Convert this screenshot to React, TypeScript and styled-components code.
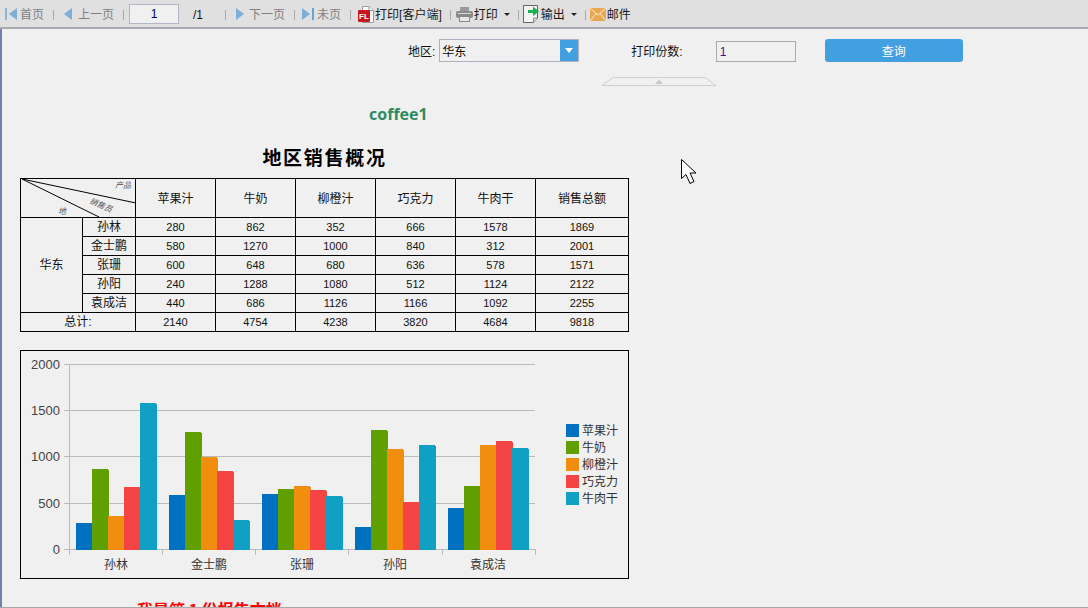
import React from "react";
import styled, { createGlobalStyle } from "styled-components";

const FONT = `"Liberation Sans", "Noto Sans CJK SC", sans-serif`;

const Global = createGlobalStyle`
  html, body { margin: 0; padding: 0; width: 1088px; height: 608px; overflow: hidden; background: #f0f0f0; }
  body { font-family: ${FONT}; font-size: 12px; color: #000; }
`;

const Page = styled.div`
  position: relative;
  width: 1088px;
  height: 608px;
  overflow: hidden;
  box-sizing: border-box;
  display: flex;
  flex-direction: column;
  border-bottom: 1px solid #a8a8a8;
`;

const Toolbar = styled.div`
  flex: none;
  height: 26px;
  padding: 1px 0 0 5px;
  display: flex;
  align-items: center;
  background: #e0e0e0;
  border-bottom: 2px solid #a9a9b2;
  box-sizing: content-box;
`;

const Tool = styled.div<{ $muted?: boolean; $gap?: number }>`
  display: flex;
  align-items: center;
  gap: ${(p) => p.$gap ?? 1}px;
  color: ${(p) => (p.$muted ? "#808080" : "#1a1a1a")};
  font-size: 12px;
  line-height: 16px;
  white-space: nowrap;
`;

const ToolLabel = styled.span`
  margin-top: 2px;
`;

const Sep = styled.span<{ $l: number; $r: number }>`
  width: 1px;
  height: 10px;
  margin: 2px ${(p) => p.$r}px 0 ${(p) => p.$l}px;
  background: #a8a8a8;
`;

const PageInput = styled.input`
  width: 50px;
  height: 20px;
  padding: 0;
  box-sizing: border-box;
  border: 1px solid #b4b4c4;
  background: #f0f0f0;
  text-align: center;
  font: 12px ${FONT};
  color: #000060;
  outline: none;
`;

const PageTotal = styled.span`
  margin: 2px 0 0 14px;
  width: 32px;
  font-size: 12px;
  color: #111;
`;

const Caret = styled.span<{ $l: number }>`
  width: 0;
  height: 0;
  margin-left: ${(p) => p.$l}px;
  border-left: 3px solid transparent;
  border-right: 3px solid transparent;
  border-top: 3px solid #222;
`;

const Main = styled.div`
  flex: 1;
  min-height: 0;
  border-left: 2px solid #6f82a8;
  display: flex;
  flex-direction: column;
`;

const FilterBar = styled.div`
  flex: none;
  height: 23px;
  margin-top: 10px;
  padding-left: 406px;
  display: flex;
  align-items: center;
`;

const FieldLabel = styled.label<{ $l?: number }>`
  margin-left: ${(p) => p.$l ?? 0}px;
  font-size: 12px;
  color: #111;
  white-space: nowrap;
`;

const SelectBox = styled.div`
  width: 140px;
  height: 23px;
  margin-left: 4px;
  box-sizing: border-box;
  border: 1px solid #b0b0c0;
  display: flex;
  align-items: stretch;
`;

const SelectText = styled.span`
  flex: 1;
  padding: 2px 0 0 2px;
  line-height: 20px;
  font-size: 12px;
`;

const SelectButton = styled.span`
  width: 18px;
  background: #42a0e0;
  display: flex;
  align-items: center;
  justify-content: center;
`;

const SelectArrow = styled.span`
  width: 0;
  height: 0;
  border-left: 4px solid transparent;
  border-right: 4px solid transparent;
  border-top: 5px solid #fff;
`;

const CopiesInput = styled.input`
  width: 80px;
  height: 21px;
  margin: 2px 0 0 33px;
  padding: 0 0 0 3px;
  box-sizing: border-box;
  border: 1px solid #aaa;
  background: #f0f0f0;
  font: 12px ${FONT};
  color: #4b0f90;
  outline: none;
`;

const QueryButton = styled.button`
  width: 138px;
  height: 23px;
  margin-left: 29px;
  padding: 0;
  border: none;
  border-radius: 3px;
  background: #42a0e0;
  color: #fff;
  font: 12px ${FONT};
`;

const Handle = styled.svg`
  flex: none;
  display: block;
  width: 116px;
  height: 9px;
  margin: 15px 0 0 599px;
`;

const ReportName = styled.div`
  flex: none;
  margin: 17px 0 0 367px;
  height: 22px;
  font: bold 16px/22px "Open Sans", "Noto Sans", sans-serif;
  color: #2e8b5f;
`;

const Report = styled.div`
  flex: none;
  width: 609px;
  margin-left: 18px;
  display: flex;
  flex-direction: column;
`;

const ReportTitle = styled.div`
  margin-top: 20px;
  height: 24px;
  text-align: center;
  font: bold 19px/24px "Noto Sans CJK SC", sans-serif;
  letter-spacing: 1.7px;
  color: #000;
`;

const Table = styled.table`
  width: 608px;
  margin-top: 9px;
  border-collapse: collapse;
  table-layout: fixed;
  border: 1px solid #000;
`;

const Cell = styled.td<{ $num?: boolean }>`
  height: 18px;
  padding: 0;
  border: 1px solid #000;
  text-align: center;
  vertical-align: middle;
  font-size: ${(p) => (p.$num ? 11 : 12)}px;
  line-height: 14px;
  color: #111;
`;

const HeadCell = styled(Cell)`
  height: 38px;
  padding-top: 2px;
  box-sizing: border-box;
`;

const DiagonalCell = styled(Cell)`
  position: relative;
  height: 38px;
`;

const DiagonalLines = styled.svg`
  position: absolute;
  left: 0;
  top: 0;
  width: 115px;
  height: 38px;
`;

const DiagonalLabel = styled.span<{ $x: number; $y: number; $r?: number }>`
  position: absolute;
  left: ${(p) => p.$x}px;
  top: ${(p) => p.$y}px;
  font: italic 8px/10px "Noto Sans CJK SC", sans-serif;
  color: #555;
  white-space: nowrap;
  transform: rotate(${(p) => p.$r ?? 0}deg);
`;

const ChartBox = styled.div`
  width: 609px;
  height: 229px;
  margin-top: 18px;
  box-sizing: border-box;
  border: 1px solid #000;
`;

const ChartSvg = styled.svg`
  display: block;
  width: 607px;
  height: 227px;
  text {
    font-family: ${FONT};
  }
`;

const Footer = styled.div`
  margin: 20px 0 0 117px;
  font: bold 16px/20px "Noto Sans CJK SC", sans-serif;
  color: #ff0000;
  white-space: nowrap;
`;

const Cursor = styled.svg`
  position: absolute;
  left: 680px;
  top: 158px;
  width: 18px;
  height: 27px;
`;

const products = ["苹果汁", "牛奶", "柳橙汁", "巧克力", "牛肉干"];
const colors = ["#0070c0", "#5f9f00", "#f18e10", "#f44444", "#10a0c4"];
const rows: [string, number[], number][] = [
  ["孙林", [280, 862, 352, 666, 1578], 1869],
  ["金士鹏", [580, 1270, 1000, 840, 312], 2001],
  ["张珊", [600, 648, 680, 636, 578], 1571],
  ["孙阳", [240, 1288, 1080, 512, 1124], 2122],
  ["袁成洁", [440, 686, 1126, 1166, 1092], 2255],
];
const totals = [2140, 4754, 4238, 3820, 4684, 9818];
const groupX = [76, 169, 262, 355, 448];
const gridLines: [number, number][] = [
  [0, 549],
  [500, 503],
  [1000, 456],
  [1500, 410],
  [2000, 364],
];

const BLUE = "#7eaed6";

const FirstIcon = () => (
  <svg width="13" height="12" viewBox="0 0 13 12">
    <rect x="0" y="0" width="2" height="12" fill="#8ab6da" />
    <path d="M12 0V12L4 6Z" fill={BLUE} />
  </svg>
);
const PrevIcon = () => (
  <svg width="10" height="12" viewBox="0 0 10 12">
    <path d="M9 0V12L1 6Z" fill={BLUE} />
  </svg>
);
const NextIcon = () => (
  <svg width="10" height="12" viewBox="0 0 10 12">
    <path d="M1 0V12L9 6Z" fill={BLUE} />
  </svg>
);
const LastIcon = () => (
  <svg width="13" height="12" viewBox="0 0 13 12">
    <path d="M0 0V12L8 6Z" fill={BLUE} />
    <rect x="10" y="0" width="2" height="12" fill="#6fa3cf" />
  </svg>
);
const ClientIcon = () => (
  <svg width="16" height="17" viewBox="0 0 16 17">
    <path d="M4.5 .5H11L15.5 4.5V16.5H4.5Z" fill="#fff" stroke="#999" />
    <path d="M11 .5V4.5H15.5" fill="#eee" stroke="#999" />
    <rect x="0" y="4" width="12" height="12" rx="1" fill="#c8161d" />
    <text x="6" y="13" textAnchor="middle" fontSize="8" fontWeight="700" fontFamily="Liberation Sans" fill="#fff">FL</text>
  </svg>
);
const PrinterIcon = () => (
  <svg width="17" height="15" viewBox="0 0 17 15">
    <rect x="4" y="0" width="9" height="5" fill="#999" />
    <rect x="0" y="4" width="17" height="7" rx="2" fill="#8a8a8a" />
    <rect x="2" y="6" width="13" height="1" fill="#d8d8d8" />
    <rect x="3.5" y="9.5" width="10" height="5" fill="#e8e8e8" stroke="#888" />
  </svg>
);
const ExportIcon = () => (
  <svg width="17" height="18" viewBox="0 0 17 18">
    <path d="M.5 .5H14.5V13L10.5 17.5H.5Z" fill="#f4f4f4" stroke="#666" />
    <path d="M10.5 17.5V13H14.5" fill="#ddd" stroke="#888" />
    <path d="M5 5H10V1.5L16 6.5L10 11V8H5Z" fill="#18b050" />
  </svg>
);
const MailIcon = () => (
  <svg width="16" height="13" viewBox="0 0 16 13">
    <rect x="0" y="0" width="16" height="13" fill="#e8a552" />
    <path d="M0 0L8 7L16 0M0 13L6 5.5M16 13L10 5.5" fill="none" stroke="#f8d9a8" strokeWidth="1.2" />
  </svg>
);

const Chart = () => {
  const topOf = (v: number) => Math.round(549 - (v * 185) / 2000);
  return (
    <ChartSvg viewBox="21 351 607 227">
      {gridLines.map(([v, row]) => (
        <g key={v}>
          <line x1="64" x2="535" y1={row + 0.5} y2={row + 0.5} stroke="#bbb" />
          <text x="60" y={row + 5} textAnchor="end" fontSize="13" fill="#444">{v}</text>
        </g>
      ))}
      <line x1="69.5" x2="69.5" y1="364" y2="550" stroke="#bbb" />
      {[69.5, 162.5, 255.5, 348.5, 442.5, 535.5].map((x) => (
        <line key={x} x1={x} x2={x} y1="549" y2="555" stroke="#bbb" />
      ))}
      {rows.map(([name, vals], g) => (
        <g key={name}>
          {vals.map((v, i) => {
            const top = topOf(v);
            const x = groupX[g] + i * 16;
            return (
              <g key={i} fill={colors[i]}>
                <rect x={x} y={top} width="16" height={550 - top} />
                <rect x={x} y={top + 1} width="17" height={549 - top} />
              </g>
            );
          })}
          <text x={groupX[g] + 40} y="569" textAnchor="middle" fontSize="12" fill="#333">{name}</text>
        </g>
      ))}
      {products.map((p, i) => (
        <g key={p}>
          <rect x="566" y={424 + i * 17} width="13" height="13" fill={colors[i]} />
          <text x="582" y={435 + i * 17} fontSize="12" fill="#333">{p}</text>
        </g>
      ))}
    </ChartSvg>
  );
};

export default function App() {
  return (
    <Page>
      <Global />
      <Toolbar>
        <Tool $muted $gap={2}><FirstIcon /><ToolLabel>首页</ToolLabel></Tool>
        <Sep $l={9} $r={9} />
        <Tool $muted $gap={5}><PrevIcon /><ToolLabel>上一页</ToolLabel></Tool>
        <Sep $l={9} $r={5} />
        <PageInput value="1" readOnly />
        <PageTotal>/1</PageTotal>
        <Sep $l={0} $r={9} />
        <Tool $muted $gap={4}><NextIcon /><ToolLabel>下一页</ToolLabel></Tool>
        <Sep $l={9} $r={7} />
        <Tool $muted $gap={2}><LastIcon /><ToolLabel>未页</ToolLabel></Tool>
        <Sep $l={9} $r={7} />
        <Tool $gap={1}><ClientIcon /><ToolLabel>打印[客户端]</ToolLabel></Tool>
        <Sep $l={8} $r={5} />
        <Tool $gap={1}><PrinterIcon /><ToolLabel>打印</ToolLabel><Caret $l={5} /></Tool>
        <Sep $l={8} $r={4} />
        <Tool $gap={1}><ExportIcon /><ToolLabel>输出</ToolLabel><Caret $l={5} /></Tool>
        <Sep $l={8} $r={4} />
        <Tool $gap={1}><MailIcon /><ToolLabel>邮件</ToolLabel></Tool>
      </Toolbar>
      <Main>
        <FilterBar>
          <FieldLabel>地区:</FieldLabel>
          <SelectBox>
            <SelectText>华东</SelectText>
            <SelectButton><SelectArrow /></SelectButton>
          </SelectBox>
          <FieldLabel $l={52}>打印份数:</FieldLabel>
          <CopiesInput value="1" readOnly />
          <QueryButton>查询</QueryButton>
        </FilterBar>
        <Handle viewBox="0 0 116 9">
          <path d="M1 8.5L12 .5H104L115 8.5Z" fill="none" stroke="#d0d0d0" />
          <path d="M54 7L58 2.5L62 7Z" fill="#c8c8c8" />
        </Handle>
        <ReportName>coffee1</ReportName>
        <Report>
          <ReportTitle>地区销售概况</ReportTitle>
          <Table>
            <colgroup>
              <col width="62" />
              <col width="53" />
              <col width="80" />
              <col width="80" />
              <col width="80" />
              <col width="80" />
              <col width="80" />
              <col width="93" />
            </colgroup>
            <tbody>
              <tr>
                <DiagonalCell colSpan={2}>
                  <DiagonalLines viewBox="0 0 115 38">
                    <path d="M1 0L115 24M1 0L78 38" stroke="#000" fill="none" />
                  </DiagonalLines>
                  <DiagonalLabel $x={94} $y={1}>产品</DiagonalLabel>
                  <DiagonalLabel $x={68} $y={21} $r={24}>销售员</DiagonalLabel>
                  <DiagonalLabel $x={37} $y={27}>地</DiagonalLabel>
                </DiagonalCell>
                {[...products, "销售总额"].map((p) => (
                  <HeadCell key={p}>{p}</HeadCell>
                ))}
              </tr>
              {rows.map(([name, vals, total], i) => (
                <tr key={name}>
                  {i === 0 && <Cell rowSpan={5}>华东</Cell>}
                  <Cell>{name}</Cell>
                  {vals.map((v, j) => (
                    <Cell key={j} $num>{v}</Cell>
                  ))}
                  <Cell $num>{total}</Cell>
                </tr>
              ))}
              <tr>
                <Cell colSpan={2}>总计:</Cell>
                {totals.map((v, j) => (
                  <Cell key={j} $num>{v}</Cell>
                ))}
              </tr>
            </tbody>
          </Table>
          <ChartBox>
            <Chart />
          </ChartBox>
          <Footer>我是第 1 份报告文档</Footer>
        </Report>
      </Main>
      <Cursor viewBox="0 0 18 27">
        <path d="M1.5 1.5V20.5L6 16.5L10 25.5L14 23.5L10 15H16Z" fill="#fff" stroke="#000" />
      </Cursor>
    </Page>
  );
}
